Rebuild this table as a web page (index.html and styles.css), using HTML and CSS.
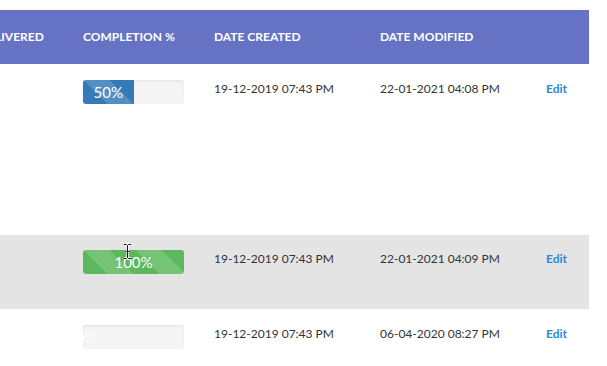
FILE: index.html
```html
<!DOCTYPE html>
<html lang="en">
<head>
<meta charset="utf-8">
<title>Orders</title>
<link rel="stylesheet" href="styles.css">
</head>
<body>
<div class="frame">
  <div class="table">
    <div class="row head">
      <div class="cell">DELIVERED</div>
      <div class="cell">COMPLETION %</div>
      <div class="cell">DATE CREATED</div>
      <div class="cell">DATE MODIFIED</div>
      <div class="cell"></div>
    </div>

    <div class="row tall">
      <div class="cell"></div>
      <div class="cell">
        <div class="progress"><div class="bar blue" style="width:50%">50%</div></div>
      </div>
      <div class="cell">19-12-2019 07:43 PM</div>
      <div class="cell">22-01-2021 04:08 PM</div>
      <div class="cell"><a class="edit" href="#">Edit</a></div>
    </div>

    <div class="row shaded">
      <div class="cell"></div>
      <div class="cell">
        <div class="progress"><div class="bar green" style="width:100%">100%</div></div>
        <svg class="ibeam" width="9" height="17" viewBox="0 0 9 17" aria-hidden="true">
          <path d="M1 1.5h2.5L4.5 2.5L5.5 1.5H8M4.5 2.5V14.5M1 15.5h2.5L4.5 14.5L5.5 15.5H8M3 8.5h3" fill="none" stroke="#fff" stroke-width="2.4"/>
          <path d="M1 1.5h2.5L4.5 2.5L5.5 1.5H8M4.5 2.5V14.5M1 15.5h2.5L4.5 14.5L5.5 15.5H8M3 8.5h3" fill="none" stroke="#111" stroke-width="1"/>
        </svg>
      </div>
      <div class="cell">19-12-2019 07:43 PM</div>
      <div class="cell">22-01-2021 04:09 PM</div>
      <div class="cell"><a class="edit" href="#">Edit</a></div>
    </div>

    <div class="row">
      <div class="cell"></div>
      <div class="cell">
        <div class="progress"><div class="bar empty" style="width:0%">0%</div></div>
      </div>
      <div class="cell">19-12-2019 07:43 PM</div>
      <div class="cell">06-04-2020 08:27 PM</div>
      <div class="cell"><a class="edit" href="#">Edit</a></div>
    </div>
  </div>
</div>
</body>
</html>
```

FILE: styles.css
```css
* { box-sizing: border-box; }

html, body {
  margin: 0;
  background: #fff;
}

body {
  font-family: Lato, "Open Sans", sans-serif;
  color: #333;
  font-size: 12px;
}

.frame {
  width: 589px;
  margin-top: 10px;
  overflow: hidden;
}

.table {
  margin-left: -21px;
}

.row {
  display: grid;
  grid-template-columns: 104px 131px 166px 166px 43px;
  align-items: start;
  padding-top: 16px;
  height: 70px;
}

.row.head {
  background: #6673c4;
  color: #fff;
  font-weight: 700;
  font-size: 12px;
  height: 54px;
  padding-top: 0;
  align-items: center;
}

.row.tall { height: 171px; }

.row.shaded {
  background: #e4e4e4;
  height: 74px;
  padding-top: 15px;
}

.cell {
  position: relative;
  line-height: 16px;
  white-space: nowrap;
}

.row:not(.head) .cell { padding-top: 1px; }

.progress {
  position: relative;
  width: 101px;
  height: 24px;
  margin-top: -1px;
  border-radius: 3px;
  background: #f4f4f4;
  box-shadow: inset 0 1px 2px rgba(0,0,0,0.08);
  overflow: hidden;
}

.bar {
  height: 100%;
  color: #fff;
  font-size: 15px;
  line-height: 24px;
  text-align: center;
  background-size: 52px 52px;
  background-image: linear-gradient(45deg,
    rgba(255,255,255,0.16) 25%, transparent 25%,
    transparent 50%, rgba(255,255,255,0.16) 50%,
    rgba(255,255,255,0.16) 75%, transparent 75%, transparent);
}

.bar.blue { background-color: #337ab7; }
.bar.green { background-color: #5cb85c; }

.bar.empty {
  text-align: left;
  color: rgba(255,255,255,0.95);
  overflow: visible;
  text-indent: -7px;
}

.ibeam {
  position: absolute;
  left: 40px;
  top: -7px;
}

.edit {
  color: #2a8bd6;
  font-weight: 700;
  text-decoration: none;
}
```
